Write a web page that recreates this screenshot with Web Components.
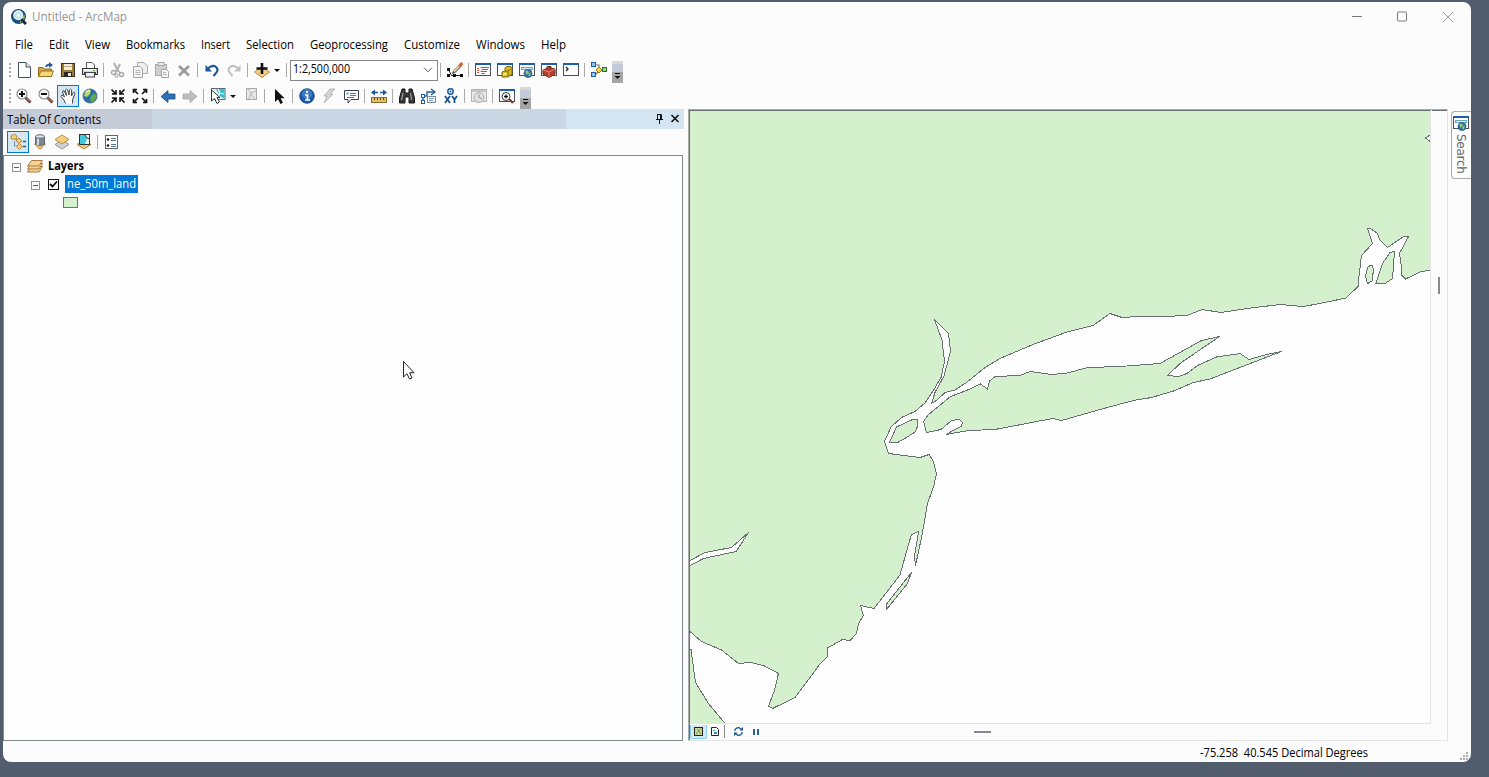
<!DOCTYPE html>
<html lang="en">
<head>
<meta charset="utf-8">
<title>Untitled - ArcMap</title>
<style>
html,body{margin:0;height:100%;background:#515c6c;overflow:hidden}
body{font-family:"Open Sans","Noto Sans",sans-serif;font-size:12px;color:#000}
</style>
</head>
<body>
<arc-window></arc-window>
<script>
const define=(tag,html,setup)=>customElements.define(tag,class extends HTMLElement{
  connectedCallback(){
    if(this.shadowRoot)return;
    const t=document.createElement('template');
    t.innerHTML=typeof html==='function'?html(this):html;
    this.attachShadow({mode:'open'}).append(t.content.cloneNode(true));
    if(setup)setup(this);
  }
});

const R=(x,y,w,h,f,s)=>`<rect x="${x}" y="${y}" width="${w}" height="${h}" fill="${f||'none'}"${s?` stroke="${s}"`:''}/>`;
const P=(d,f,s,w)=>`<path d="${d}" fill="${f||'none'}"${s?` stroke="${s}"`:''}${w?` stroke-width="${w}"`:''}/>`;
const C=(x,y,r,f,s,w)=>`<circle cx="${x}" cy="${y}" r="${r}" fill="${f||'none'}"${s?` stroke="${s}"`:''}${w?` stroke-width="${w}"`:''}/>`;
const win=inner=>R(.5,1.5,15,12,'#fff','#4b4f55')+R(0,1,16,2,'#1c5fae')+inner;
const globe=(x,y,r)=>C(x,y,r,'#2d74b8','#2c5480',.8)+P(`M${x-r*.7} ${y-r*.5}L${x} ${y-r*.8}L${x+r*.2} ${y-r*.2}L${x-r*.3} ${y+r*.3}Z M${x+r*.2} ${y}L${x+r*.7} ${y-r*.3}L${x+r*.5} ${y+r*.6}L${x+r*.1} ${y+r*.7}Z`,'#9ccc5c');
const lens=inner=>P('M9.5 9.5L14.5 14.5','none','#6a3b32',3)+P('M10 9.5L14 13.5','none','#c9a090',1)+C(6,6,5,'#f8f8f8','#8c8c8c',1.2)+inner;
const stack=(y,f,s)=>P(`M8 ${y}L15 ${y+4.5}L8 ${y+9}L1 ${y+4.5}Z`,f,s);
const ICONS={
 app:C(7.5,7.5,7.5,'#164c80')+P('M2 6Q4 1 10 1L8 4L3 11Z','#2aa09a')+P('M9 8L14 6Q14 12 9 14Z','#79b96b')+P('M10 10L15 15','none','#1c2c3c',3)+C(7.3,6.3,4.2,'#b9e0f0','#e8eef2',1.6)+P('M5 7L7 4L9.5 6L8 9Z','#e9f7e4'),
 new:P('M2.5 .5H10L14.5 5V15.5H2.5Z','#fff','#45505e')+P('M10 .5V5H14.5','#dfe6ee','#45505e'),
 open:P('M.5 14.5V5.5H5L6 7H13.5V14.5Z','#d7a83e','#8f6b1e')+P('M.5 14.5L3 9H15.5L13.5 14.5Z','#f5d878','#9a7426')+P('M8 5Q9 2 12 3','none','#235a96',1.8)+P('M11 0L15 3L11 6Z','#235a96'),
 save:R(1.5,1.5,13,13,'#9b7d35','#3d3222')+R(4,2,8,6,'#f3ecd9')+R(4,4,8,1,'#b9ab88')+R(4,10,8,5,'#2b2926')+R(8,11,3,3,'#e8e6e0'),
 print:P('M4.5 6V.5H10L12.5 3V6','#fff','#555')+R(.5,6.5,15,6,'#d5d5d5','#333')+R(2,7,12,2,'#f3f3f3')+R(2,10,12,2,'#474747')+R(3.5,10.5,9,4.5,'#e9f1f6','#444')+R(11,8,2,1,'#64a640'),
 cut:P('M4 1L8 9M10 2L6 10','none','#b0b0b0',2)+C(3.5,10.5,2,'none','#a8a8a8',1.4)+C(11.5,12.5,2,'none','#a8a8a8',1.4)+C(6.5,13.5,1.6,'none','#b0b0b0',1.2)+P('M7.500 8L10 11','none','#b0b0b0',1.8),
 copy:P('M5.5 .5H12L15.5 4V11.5H5.5Z','#eee','#aaa')+P('M1.5 4.5H8L10.5 7V15.5H1.5Z','#f5f5f5','#a5a5a5')+P('M3.5 8.5H8.5M3.5 10.5H8.5M3.5 12.5H8.5','none','#b5b5b5'),
 paste:R(1.5,2.5,11,11,'#cfcfcf','#aaa')+R(4,.5,6,3,'#eee','#a5a5a5')+P('M7.5 7.5H12.5L14.5 9.5V15.5H7.5Z','#f5f5f5','#a5a5a5')+P('M9 10.5H12M9 12.5H13','none','#b5b5b5'),
 del:P('M3 4L13 13.5M13 4L3 13.5','none','#9c9c9c',2.8),
 undo:P('M3.5 7Q8 2 12 5Q15 8 12 11L9.500 14','none','#1e568f',2.1)+P('M1.5 3V9.5H8Z','#1e568f'),
 redo:P('M12.5 7Q8 2 4 5Q1 8 4 11L6.5 14','none','#c2c2c2',2.1)+P('M14.5 3V9.5H8Z','#c2c2c2'),
 add:P('M8 5L15.5 10L8 15.5L.5 10Z','#f3cf88','#b98a45')+P('M8 1V12M2.5 6.5H13.5','none','#111',2.6),
 editor:P('M1.5 7.5L4.5 13.5H14','none','#222',1)+R(0,6,3,3,'#111')+R(0,12,3,3,'#111')+R(6,12,3,3,'#111')+R(13,12,3,3,'#111')+P('M7 10L13 4','none','#8b8377',3.2)+P('M5 12L6 9L8 11Z','#333')+P('M12.5 4L15.500 1','none','#d56637',3.2)+P('M7 9.5L12 4.5','none','#eadfb9',1.2),
 list:win(P('M2 6.5H4M2 8.5H4M2 10.5H4','none','#e14b38')+P('M5.5 5.5H14M6.500 7.5H13M5.5 9.5H12M6.500 11.5H10','none','#3580c4')),
 catalog:win(P('M5 10L8 9V6L10 4.500H14L15 6V12L11 15H5Z','#d9bb22','#7e6810')+P('M8 9H11V14M11 9L14 7','none','#7e6810')+R(6,11,4,2,'#f7e96e')),
 searchwin:win(R(2.5,5.5,11,2,'#d5ecf2','#6ea9bb')+globe(9,11.5,4)),
 toolbox:win(P('M2 8L8 5.5L14 7V12L8 15.5L2 12Z','#b93d2d','#73251d')+P('M2 8L8 10L14 7M8 10V15','none','#e28672')+P('M6 6V4.500H10V6','none','#73251d')),
 python:win(P('M3 5L5 7L3 9','none','#222',1.3)),
 model:P('M4 3H8V8H13M4 13L8 9','none','#777',1.2)+R(.5,.5,4,4,'#8cc8f0','#1b62ab')+R(.5,10.5,4,4,'#8cc8f0','#1b62ab')+P('M8 5L11 8L8 11L5 8Z','#f1d544','#9c7e10')+R(11.5,5.5,4,4,'#94d474','#2a742c'),
 zoomin:lens(P('M3 6H9M6 3V9','none','#111',2)),
 zoomout:lens(P('M3 6H9','none','#111',2)),
 hand:P('M5.5 15.5L4 12L1 8.5Q1 6.500 3 7.500L4.500 9L2.500 4Q2.500 2 4.200 3L6.5 7.500L5.500 2Q6.500 .2 7.700 1.800L9 7L9.500 2Q10.500 .3 11.600 2L11.5 8L13.2 4.5Q14.8 3.800 15 5.5L12.500 12V15.500','#fff','#444'),
 globe:C(8,8,7,'#276cad','#55708c')+P('M3 4L7 1L9 3L8 6L5 9L2 8Z','#bbd65f')+P('M9 8L12 5L15 8L12 13L9 14L8 11Z','#5cac52')+P('M4 4Q6 2 8 3','none','#e6f2b0',1.4),
 fixin:['M1.5 1.5L6 6M6 2V6H2','M14.5 1.5L10 6M10 2V6H14','M1.5 14.5L6 10M6 14V10H2','M14.5 14.5L10 10M10 14V10H14'].map(d=>P(d,'none','#111',1.6)).join(''),
 fixout:['M6 6L1.5 1.5M1.5 5V1.5H5','M10 6L14.5 1.5M14.5 5V1.5H11','M6 10L1.5 14.5M1.5 11V14.5H5','M10 10L14.5 14.5M14.5 11V14.5H11'].map(d=>P(d,'none','#111',1.6)).join(''),
 back:P('M1 8.5L8 2.5V6H15V11H8V14.5Z','#2e70b8','#205087',.8),
 fwd:P('M15 8.5L8 2.5V6H1V11H8V14.5Z','#bdbdbd','#a8a8a8',.8),
 select:R(1.5,.5,13.5,11,'#e4edf0','#606a70')+P('M6 1H14.500V11L10 8Z','#31c1d3')+P('M8 1L10 5L14 6M10 5L7 10','none','#fff',1.2)+P('M1.5 2V13L4.5 10.5L7 15.5L9.5 14L7 9.5H10Z','#fff','#333'),
 clearsel:R(3.5,.5,10,11,'#e9e9e9','#aaa')+P('M5 1L8 5L6 11M8 5L13 3M8 6L12 11','none','#b5b5b5'),
 arrow:P('M4 1V14L7 11.2L9.5 16L12 14.7L9.6 10.3H13.7Z','#111'),
 info:C(8,8,7.3,'#195bac','#194077',.8)+C(8,6,5,'#3f7cc3')+R(7,3,2,2,'#fff')+P('M6 7H8.500V12M6 12H11','none','#fff',1.7),
 bolt:P('M9 1H14L9 6H12L3 15L6 8H3Z','#d5d5d5','#aaa',.8),
 popup:P('M1.5 2.5H15.5V11.5H8L5 15V11.5H1.5Z','#fff','#38424e')+R(3.5,4.5,2,2,'#5292c9')+P('M7 5.5H13M7 7.5H13M4 9.5H11','none','#3d7cb8'),
 measure:P('M1 4.5H15','none','#1b58a1',1.5)+P('M0 4.5L4 1.5V7.5ZM16 4.5L12 1.5V7.5Z','#1b58a1')+R(7,3,2,3,'#fff')+R(.5,9.5,15,5,'#e3c070','#8a6b2e')+P('M3.5 10V12M6.5 10V12M9.5 10V12M12.5 10V12','none','#69501c'),
 binoc:P('M3 1H6V5H10V1H13L15.5 10V15H10V9H6V15H.5V10Z','#35383a','#191919')+P('M4 5L2.500 12M11.5 5L12.500 12','none','#999',1.3),
 route:P('M2 13V8H6V4H13','none','#1f609f',1.4)+P('M10 1L14 4L10 7','none','#1f609f',1.4)+R(.5,6.5,3,3,'#fff','#1f609f')+R(.5,12.5,3,3,'#fff','#1f609f')+R(6.5,8.5,8,6,'#edf2f5','#788c9a')+P('M8 10.500H13M8 12.500H12','none','#8da1af'),
 xy:C(7.5,3.5,2.7,'#fff','#1b5a9d',1.5)+C(7.5,3.5,1,'#1b5a9d')+P('M2 8L7 15M7 8L2 15M9 8L11.5 11.5M14 8L11.5 11.5V15','none','#164c88',1.7),
 time:R(.5,1.5,15,12,'#ececec','#b2b2b2')+R(1,2,14,2,'#c7c7c7')+C(8,9.5,5,'#e2e2e2','#aaa')+P('M8 6V9.5L11 11','none','#999'),
 viewer:win(P('M10 11L14 15','none','#7d3c2c',2.3)+C(7,8.5,4,'#fff','#333')+P('M5 8.5H9M7 6.5V10.5','none','#111',1.3)),
 bydraw:P('M4.5 7V12H8M5 5L9 7','none','#7893aa')+P('M4 0L7 2L6.5 5H1.5L1 2Z','#f7d178','#b68a47')+P('M9 4L12 7L9 9.5L6 7ZM9.500 10L12.500 12.5L9.500 15.5L6.500 12.5Z','#f7ce74','#b68a47')+P('M13 7.500H16M13 12.500H16','none','#245b93',1.5),
 bysource:P('M2.5 10L8 15.5L13.5 10Z','#efc371','#b18444')+P('M3.5 2V10Q8 13 12.5 10V2','#7d8793','#5d6976')+P('M6 4V11','none','#d2dae0',2)+`<ellipse cx="8" cy="2.5" rx="4.5" ry="1.8" fill="#dae5ec" stroke="#63707c"/>`,
 byvis:stack(6,'#d0d3d6','#8e9499')+stack(1,'#f5ce80','#bb8b42'),
 bysel:stack(6,'#efc374','#b18444')+R(3.5,.5,10,10,'#42c8db','#333')+P('M9 1L11 5L9 10H13V1Z','#eef5f5')+P('M9 1L11 4L14 5','none','#333'),
 options:R(2.5,1.5,12,13,'#fff','#5b6671')+P('M8 4.500H13M8 6.500H13M8 10.500H13M8 12.500H13','none','#59788f')+C(5,5.500,1.2,'#111')+C(5,11.500,1.2,'#111'),
 layers:[9,6,3].map(y=>P(`M.5 ${y+4}L4.500 ${y-1.5}H15.5L12 ${y+4}Z`,'#f6d292','#a97a43')).join(''),
 mapview:R(2.5,2.5,8,8,'#c9d98a','#222')+P('M4 9L9 3.500M5.500 4L9 9','none','#6b9383'),
 layout:P('M3.500 2.500H8.500L10.500 4.500V10.500H3.500Z','#fff','#222')+R(5,5,2,1,'#38a4c5')+R(6,7,3,2,'#2c8fbf'),
 refresh:P('M2.700 6Q3.500 2.5 7 2.700L9.500 4.500M10.300 7Q9.500 10.5 6 10.300L3.500 8.500','none','#18518b',1.2)+P('M11 2V5.500H7.500ZM2 11V7.500H5.500Z','#18518b'),
 pause:R(4,4,2,6,'#2361a7')+R(8,4,2,6,'#2361a7'),
};
define('arc-icon',e=>{const s=+(e.getAttribute('size')||16);return `<style>:host{display:block;flex:none;width:${s}px;height:${s}px}svg{display:block}</style><svg width="${s}" height="${s}" viewBox="0 0 ${s} ${s}">${ICONS[e.getAttribute('name')]}</svg>`});

/* Label whose glyphs are condensed or widened to a given width */
define('fit-text','<style>:host{display:block;flex:none;white-space:pre;line-height:16px}span{display:inline-block;transform-origin:0 50%}</style><span><slot></slot></span>',e=>{
  const w=+e.getAttribute('w'),s=e.shadowRoot.querySelector('span');
  e.style.width=w+'px';
  const n=s.getBoundingClientRect().width;
  if(n)s.style.transform=`scaleX(${w/n})`;
});

define('tool-button',e=>`<style>:host{display:flex;align-items:center;flex:none;width:22px;height:22px;padding-left:3px;box-sizing:border-box}
:host([menu]){width:33px}:host([on]){background:#d5e6f3;border:1px solid #0078d7;padding-left:2px}
i{border:3px solid transparent;border-top-color:#111;border-bottom:0;margin-left:4px}</style><arc-icon name="${e.getAttribute('icon')}"></arc-icon>${e.hasAttribute('menu')?'<i></i>':''}`);
define('tool-sep','<style>:host{display:block;flex:none;width:1px;height:14px;background:#aaa;margin:0 3px 0 2px}</style>');
define('tool-grip','<style>:host{display:block;flex:none;width:2px;height:14px;margin:0 2px 0 6px;background:repeating-linear-gradient(#aaa 0 2px,transparent 2px 4px)}</style>');
define('tool-more','<style>:host{display:block;flex:none;width:11px;height:22px;margin:4px 0 0 2px;background:linear-gradient(#d9d9d9 0 3px,#c2cad7 3px 11px,#a5a5a5 11px)}svg{display:block}</style><svg width="11" height="22"><path d="M3 12.5H8" stroke="#111"/><path d="M2.5 15H8.5L5.5 18Z" fill="#111"/></svg>');
define('scale-box',`<style>:host{display:flex;align-items:center;flex:none;box-sizing:border-box;width:148px;height:21px;border:1px solid #858585;background:#fff;padding:0 4px 0 2px;justify-content:space-between}fit-text{margin-top:-2px}</style><fit-text w="57">1:2,500,000</fit-text><svg width="10" height="6"><path d="M1 .7L5 4.7L9 .7" fill="none" stroke="#555"/></svg>`);
define('tool-bar','<style>:host{display:flex;align-items:center;height:26px;box-sizing:border-box}</style><slot></slot>');

define('title-bar',`<style>:host{display:flex;height:30px;align-items:center;padding:0 17px 0 8px;color:#969696}fit-text{margin-left:5px}svg{margin-left:auto}arc-icon{margin-top:-1px}</style>
<arc-icon name="app"></arc-icon><fit-text w="95">Untitled - ArcMap</fit-text>
<svg width="102" height="14" fill="none" stroke="#777"><path d="M0 6.5H10"/><rect x="45.500" y="2" width="9" height="9" rx="1"/><path d="M91 2L101 12M101 2L91 12" stroke="#999"/></svg>`);
define('menu-bar',`<style>:host{display:flex;gap:16px;padding:5px 0 0 12px;height:20px}</style>`+[['File',18],['Edit',20],['View',25],['Bookmarks',59],['Insert',29],['Selection',48],['Geoprocessing',78],['Customize',56],['Windows',49],['Help',25]].map(([t,w])=>`<fit-text w="${w}">${t}</fit-text>`).join(''));

define('toc-panel',`<style>:host{display:flex;flex-direction:column;width:681px;flex:none}
header{height:20px;display:flex;align-items:center;padding:0 4px 0 4px;box-sizing:border-box;background:linear-gradient(90deg,#c5ccd8 0 149px,#cad8e5 149px 563px,#d4e4f1 563px)}
header fit-text{margin-top:2px}
header svg{margin:-1px 0 0 auto}
nav{display:flex;align-items:center;height:26px;padding-left:4px}
nav tool-sep{margin:0 2px 0 2px}
section{flex:1;box-sizing:border-box;width:680px;border:1px solid #82878c;background:#fdfdfd}
.row{display:flex;align-items:center;height:18px}
.box{width:7px;height:7px;border:1px solid #929292;background:linear-gradient(#3c6697,#3c6697) 1px 3px/5px 1px no-repeat #fafafa}
.chk{width:9px;height:9px;border:1px solid #111;margin-left:8px;background:#fff}.chk svg{display:block}
.sel{background:#0078d7;color:#fff;margin-left:6px;padding:0 2px;height:18px;display:flex;align-items:center}
.sw{width:13px;height:9px;border:1px solid #717171;background:#d5f0cc;margin-left:59px}</style>
<header><fit-text w="94">Table Of Contents</fit-text><svg width="25" height="11" fill="none" stroke="#111"><path d="M2.500 1.500H6.500V6M2.500 1V6M1 6.500H8M4.500 7V11M5.500 2V6"/><path d="M16.500 2L23.500 9M23.500 2L16.500 9" stroke-width="1.600"/></svg></header>
<nav><tool-button on icon="bydraw"></tool-button><tool-button icon="bysource"></tool-button><tool-button icon="byvis"></tool-button><tool-button icon="bysel"></tool-button><tool-sep></tool-sep><tool-button icon="options"></tool-button></nav>
<section><div class="row" style="padding:2px 0 0 8px;height:17px"><div class="box" style="margin-top:2px"></div><arc-icon name="layers" style="margin-left:6px"></arc-icon><fit-text w="36" style="font-weight:700;margin-left:5px;margin-top:-2px">Layers</fit-text></div>
<div class="row" style="padding-left:27px"><div class="box" style="margin-top:2px"></div><div class="chk" style="margin-left:8px"><svg width="9" height="9"><path d="M1 4L3.500 6.500L8 1.500" fill="none" stroke="#111" stroke-width="1.800"/></svg></div><div class="sel"><fit-text w="69">ne_50m_land</fit-text></div></div>
<div class="row"><div class="sw"></div></div></section>`);

define('coast-map',`<style>:host{display:block;width:740px;height:612px}svg{display:block}</style>
<svg width="740" height="612" viewBox="690 111 740 612" shape-rendering="crispEdges" fill="#d5f0cc" stroke="#696f73" stroke-width="1"><rect x="690" y="111" width="740" height="612" fill="#fdfdfd" stroke="none"/>
<path d="M1440 100V270H1430L1420 272L1405.500 279L1401.500 275L1401 264L1399.500 253L1403 247L1408.500 236.500L1403 237L1387.500 247.500L1380 240L1377 233L1371 229L1367.500 228.500L1372.500 243.500L1361.500 255.500L1359 276L1358.500 286L1346 298L1320 303.500L1303 306.500L1280 304.500L1247 308.500L1221 312.500L1202 309.500L1187 315.500L1163 316.500L1138 316.500L1122 317.500L1110 313.500L1093 325.500L1067 332L1033 344.500L1000 358.500L985 367.500L966.500 382.500L955 390L945 392.500L937 400L931.500 403.500L935 392.500L944 376L950.500 351.500L948.500 333.500L943 328L934.500 319.500L942 340L944.500 361.500L941 377.500L934 389.500L925 403L915 411.500L901.500 417.500L891 427L884.500 441.500L888.500 453.500L920 457.500L929 454.500L933.500 461.500L936.500 474L933.500 487L927.500 503.500L924.500 521.500L921 540L915.500 565.500L914.500 556.500L918.500 531.500L911.500 534.500L906.500 551.500L900 575L874 608.500L860.500 605.500L863.500 615.500L858.500 623.500L856.500 633.500L850 640.500L842.500 639.500L827.500 648V656.500L820 664L795 697.500L772.500 708.500L768.500 706L774.500 690.500L778.500 673.500L763.500 665.500L750.500 662.500L738.500 663.500L721.500 650L701.500 641.500L690 631.500H680V100Z"/>
<path d="M680 649.500H691L692 657L695.500 682.500L708.500 703.500L725 723.500V740H680Z"/>
<path fill="#fdfdfd" d="M680 565L690 560.500L705 552.500L731.500 547.500L748.500 532.500L736 551.500L703.500 558.500L690 565.500L680 570Z"/>
<path fill="#fdfdfd" d="M1440 130L1430 135L1425.500 138L1430 141.500H1440Z"/>
<path d="M911.500 572.500L907.500 583.500L886.500 609.500V604Z"/>
<path d="M1370 265.500H1372.500L1373.500 270L1372 281L1367.500 283.500L1365.500 276.500L1367.500 267.500Z"/>
<path d="M1394.500 251.500L1390 252.500L1382.500 263.500L1376 283.500L1385 283.500L1392.500 278.500Z"/>
<path d="M917.500 420L912.500 419.500L896.500 427L889.500 442.500H897.500L906.500 437.500L915 432L917.500 426.500Z"/>
<path d="M923.500 421.500L928 415L950.500 396.500L966.500 390.500L980.500 384L987.500 389L989.500 381L995 376.500L1020 375.500L1030 371.500L1051.500 374.500L1067 373L1088 367.500L1120 366.500L1160 363.500L1201.500 340.500L1219.500 336.500L1180 363.500L1167.500 375.500L1178.500 376.500L1187 373.500L1197.500 365.500L1216.500 357L1240 353.500L1249 359.500L1266.500 354.500L1281.500 351.500L1210 379L1193.500 382.500L1173.500 391L1151.500 397.500L1133.500 400.500L1100 409.500L1061.500 420.500L1052.500 418.500L995 429.500L968.500 430.500L946 434.500L961.500 426L962.500 422.500L959.500 419.500L951.500 420.500L941 429.500L926.500 432.500Z"/></svg>`);

define('map-frame',`<style>:host{display:grid;grid-template:614px 1fr/742px 1fr;width:760px;height:632px;box-sizing:border-box;border-left:1px solid #aaa;border-top:1px solid #aaa;border-right:1px solid #e3e3e3;border-bottom:1px solid #e3e3e3;flex:none}
.m{border-left:1px solid #696f73;border-top:1px solid #696f73;border-right:1px solid #e3e3e3;border-bottom:1px solid #e3e3e3;width:740px}
.v{border-top:1px solid #696f73;margin-left:1px;padding:166px 0 0 6px}.v:before{content:"";display:block;width:2px;height:17px;background:#868a8e}
.b{display:flex;align-items:center;border-left:1px solid #696f73;height:16px}
.t{width:15px;height:13px;margin-top:-1px;display:flex;align-items:center;justify-content:center}.t.on{width:16px;background:#d7e7f2;border:1px solid #86cff3;border-top:0;border-radius:0 0 2px 2px;box-sizing:border-box;width:17px;height:14px}
.h{width:17px;height:2px;background:#868a8e;margin-left:211px}
hr{border:0;width:1px;height:13px;background:#888;margin:-1px 4px 0 2px}</style>
<div class="m"><coast-map></coast-map></div><div class="v"></div>
<div class="b"><div class="t on"><arc-icon size="13" name="mapview"></arc-icon></div><div class="t"><arc-icon size="13" name="layout"></arc-icon></div><hr><div class="t" style="margin-left:2px"><arc-icon size="13" name="refresh"></arc-icon></div><div class="t" style="margin-left:2px"><arc-icon size="14" name="pause"></arc-icon></div><div class="h"></div></div>`);

define('search-tab',`<style>:host{display:flex;flex-direction:column;align-items:center;box-sizing:border-box;width:20px;height:68px;margin:2px 0 0 3px;border:1px solid #aaa;border-right:0;border-radius:4px 0 0 4px;padding:3px 2px 0 0}
div{writing-mode:vertical-rl;color:#666;font:12px/14px "DejaVu Sans",sans-serif;height:40px;margin-top:3px;letter-spacing:-.25px}</style><arc-icon name="searchwin"></arc-icon><div>Search</div>`);

define('status-bar',`<style>:host{display:flex;align-items:center;height:21px;padding:0 3px 0 0;justify-content:flex-end}fit-text{margin:3px 92px 0 0}svg{align-self:flex-end;margin-bottom:2px}</style><fit-text w="168">-75.258  40.545 Decimal Degrees</fit-text><svg width="8" height="8" fill="#aaa"><path d="M6 0h2v2h-2zM3 3h2v2h-2zM6 3h2v2h-2zM0 6h2v2h-2zM3 6h2v2h-2zM6 6h2v2h-2z"/></svg>`);

const B=n=>n.split(' ').map(k=>k==='|'?'<tool-sep></tool-sep>':k==='#'?'<scale-box></scale-box>':`<tool-button icon="${k.replace('+','')}"${k.endsWith('+')?' menu':''}${k==='hand'?' on':''}></tool-button>`).join('');
define('arc-window',`<style>:host{display:block;box-sizing:border-box;width:1468px;height:760px;margin:2px 0 0 3px;background:#fcfcfc;border-radius:8px;position:relative;overflow:hidden}
main{display:flex;height:632px}toc-panel{height:632px;margin-right:4px}
.cursor{position:absolute;left:399px;top:358px}</style>
<title-bar></title-bar><menu-bar></menu-bar>
<tool-bar><tool-grip></tool-grip>${B('new open save print | cut copy paste del | undo redo | add+ | # | editor | list catalog searchwin toolbox python | model')}<tool-more></tool-more></tool-bar>
<tool-bar><tool-grip></tool-grip>${B('zoomin zoomout hand globe | fixin fixout | back fwd | select+ clearsel | arrow | info bolt popup | measure | binoc route xy | time | viewer')}<tool-more></tool-more></tool-bar>
<main><toc-panel></toc-panel><map-frame></map-frame><search-tab></search-tab></main>
<status-bar></status-bar>
<svg class="cursor" width="13" height="20"><path d="M1.500 1.500V17L5 13.700L7.500 19L10 18L7.700 12.700H12Z" fill="#fff" stroke="#222"/></svg>`);
</script>
</body>
</html>
